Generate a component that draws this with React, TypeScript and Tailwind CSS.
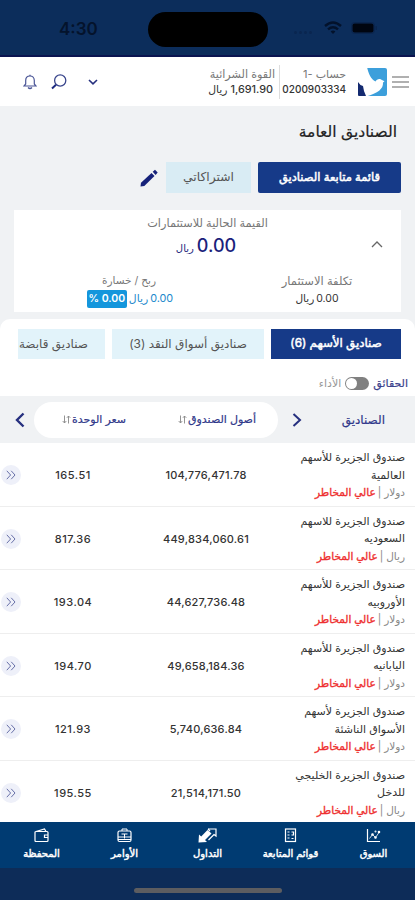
import React from "react";

export default function App() {
  return (
    <div
      dir="rtl"
      className="flex flex-col w-[415px] h-[900px] overflow-hidden bg-white text-[#333] font-[Inter,'DejaVu_Sans',sans-serif]"
    >
      <StatusBar />
      <Header />
      <Summary />
      <Funds />
      <BottomNav />
    </div>
  );
}

const funds = [
  { name: ["صندوق الجزيرة للأسهم", "العالمية"], currency: "دولار", assets: "104,776,471.78", price: "165.51" },
  { name: ["صندوق الجزيرة للاسهم", "السعوديه"], currency: "ريال", assets: "449,834,060.61", price: "817.36" },
  { name: ["صندوق الجزيرة للأسهم", "الأوروبيه"], currency: "دولار", assets: "44,627,736.48", price: "193.04" },
  { name: ["صندوق الجزيرة للأسهم", "اليابانيه"], currency: "دولار", assets: "49,658,184.36", price: "194.70" },
  { name: ["صندوق الجزيرة لأسهم", "الأسواق الناشئة"], currency: "دولار", assets: "5,740,636.84", price: "121.93" },
  { name: ["صندوق الجزيرة الخليجي", "للدخل"], currency: "ريال", assets: "21,514,171.50", price: "195.55" },
];

const StatusBar = () => {
  return (
    <div
      dir="ltr"
      className="flex-none flex items-center h-[57px] bg-[#0c2d5b] border-b-2 border-[#0b1450]"
    >
      <div className="w-[148px] pl-[59px] pt-[4px] text-[17px] font-semibold text-[#04132c]">
        4:30
      </div>
      <div className="w-[120px] h-[35px] mt-[3px] rounded-full bg-black" />
      <div className="flex items-center pl-[26px] pt-[1px]">
        <div className="flex gap-[2px] w-[30px] pt-[9px]">
          <i className="w-[3px] h-[3px] rounded-full bg-[#0a2650]" />
          <i className="w-[3px] h-[3px] rounded-full bg-[#0a2650]" />
          <i className="w-[3px] h-[3px] rounded-full bg-[#0a2650]" />
          <i className="w-[3px] h-[3px] rounded-full bg-[#0a2650]" />
        </div>
        <svg width="18" height="14" viewBox="0 0 18 14" fill="none" stroke="#03122b" strokeWidth="2.4">
          <path d="M1 5 Q9 -2 17 5" />
          <path d="M4 8.3 Q9 4 14 8.3" />
          <path d="M6.6 10.6 Q9 8.6 11.4 10.6 L9 13 Z" fill="#03122b" stroke="none" />
        </svg>
        <svg className="ml-[9px]" width="27" height="12" viewBox="0 0 27 12">
          <rect x="0.5" y="0.5" width="23" height="11" rx="3" fill="none" stroke="#0a254e" />
          <rect x="1.5" y="1.5" width="21" height="9" rx="2" fill="#000510" />
          <rect x="24.5" y="4" width="1.5" height="4" rx="0.7" fill="#0a254e" />
        </svg>
      </div>
    </div>
  );
};

const Header = () => {
  return (
    <div className="flex-none flex items-center h-[49px] bg-white pr-[6px]">
      <div className="flex flex-col gap-[3px] w-[17px]">
        <div className="h-[2px] bg-[#b0b0b0]" />
        <div className="h-[2px] bg-[#b0b0b0]" />
        <div className="h-[2px] bg-[#b0b0b0]" />
      </div>
      <svg className="mr-[5px]" width="29" height="30" viewBox="0 0 29 30">
        <path d="M9 1 H27 Q29 1 29 3 V27 Q29 29 27 29 H8 Z" fill="#3c9fdb" />
        <path d="M9 0 C10.5 7 13 12 17.5 14.5 C18.5 12.5 21 11.3 23 12.5 L26.500 14.300 L25 15.500 C25.500 22 20 26 8 29.500 L0 15 Z" fill="#fff" />
        <path d="M0 15 Q2 18.5 5 19 Q5.500 24 8 29 H1 Q0 29 0 28 Z" fill="#142a70" />
      </svg>
      <div className="flex flex-col items-start mr-[12px] w-[63px] text-[11px] leading-[15px] whitespace-nowrap">
        <div className="text-[#777]">حساب -1</div>
        <div className="text-[10px] font-medium">0200903334</div>
      </div>
      <div className="w-px h-[34px] mr-[3px] bg-[#ddd]" />
      <div className="flex flex-col items-start mr-[4px] w-[66px] text-[11px] leading-[15px] whitespace-nowrap">
        <div className="text-[11.2px] text-[#777]">القوة الشرائية</div>
        <div className="flex gap-[3px] pr-[2px] text-[10.8px] font-medium">
          <span>1,691.90</span>
          <span>ريال</span>
        </div>
      </div>
      <svg className="mr-[111px]" width="10" height="6" viewBox="0 0 10 6" fill="none" stroke="#26307f" strokeWidth="1.6">
        <path d="M1 1 L5 4.8 L9 1" />
      </svg>
      <svg className="mr-auto" width="16" height="16" viewBox="0 0 16 16" fill="none" stroke="#39458c">
        <circle cx="9.2" cy="6.5" r="5.6" strokeWidth="1.3" />
        <path d="M5 10.8 L1 14.5" strokeWidth="2" stroke="#1d2a80" />
      </svg>
      <svg className="mr-[14px] ml-[23px]" width="14" height="16" viewBox="0 0 14 16" fill="none" stroke="#4a5596" strokeWidth="1.2">
        <path d="M1 12 H13 L11.3 10 V6.5 C11.3 3.5 9.5 2 7 2 C4.5 2 2.7 3.5 2.7 6.5 V10 Z" />
        <path d="M7 2 V0.7 M5 13.5 Q7 15.5 9 13.5" />
      </svg>
    </div>
  );
};

const Summary = () => {
  return (
    <div className="flex-none h-[213px] px-[14px] bg-[#f0f2f4]">
      <h1 className="pt-[14px] pr-[4px] h-[56px] text-[15.5px] leading-[24px] text-[#222] [-webkit-text-stroke:0.2px]">
        الصناديق العامة
      </h1>
      <div className="flex items-center h-[31px]">
        <div className="flex items-center justify-center w-[143px] h-[31px] rounded-[2px] bg-[#163a88] text-white text-[11.5px] [-webkit-text-stroke:0.5px] whitespace-nowrap">
          قائمة متابعة الصناديق
        </div>
        <div className="flex items-center justify-center w-[85px] h-[31px] mr-[7px] bg-[#d9ecf4] text-[12.3px] text-[#555]">
          اشتراكاتي
        </div>
        <svg className="mr-[8px]" width="18" height="18" viewBox="0 0 18 18" fill="#16227a">
          <path d="M0.5 17.5 L1 13.7 L11.5 4 L14.5 7 L4.3 17 Z" />
          <path d="M12.7 2.8 L15 0.7 L17.7 3.6 L15.6 5.9 Z" />
        </svg>
      </div>
      <div className="mt-[17px] h-[102px] bg-white">
        <div className="flex items-start h-[62px]">
          <svg className="mt-[31px] mr-[18px]" width="12" height="7" viewBox="0 0 12 7" fill="none" stroke="#666" strokeWidth="1.3">
            <path d="M1 6 L6 1 L11 6" />
          </svg>
          <div className="flex-1 flex flex-col items-center pl-[30px] pt-[4px]">
            <div className="text-[11.3px] leading-[18px] text-[#777]">القيمة الحالية للاستثمارات</div>
            <div className="flex items-baseline gap-[3px] pr-[3px] text-[#1b1f7c] leading-[28px]">
              <span className="text-[18px] font-medium">0.00</span>
              <span className="text-[10px]">ريال</span>
            </div>
          </div>
        </div>
        <div className="flex text-[11px] leading-[18px]">
          <div className="flex flex-col items-center w-[168px]">
            <div className="text-[11.5px] text-[#777]">تكلفة الاستثمار</div>
            <div className="flex gap-[2px] text-[10.5px]">
              <span>0.00</span>
              <span>ريال</span>
            </div>
          </div>
          <div className="flex flex-col items-center w-[206px]">
            <div className="pr-[2px] text-[10.5px] text-[#777]">ربح / خسارة</div>
            <div className="flex items-center gap-[2px] text-[10.8px] text-[#2389cc]">
              <span>0.00</span>
              <span>ريال</span>
              <span dir="ltr" className="w-[40px] h-[18px] text-center rounded-[2px] bg-[#1496dc] text-white font-semibold text-[10.5px]">
                % 0.00
              </span>
            </div>
          </div>
        </div>
      </div>
    </div>
  );
};

const Funds = () => {
  return (
    <div className="flex-none h-[503px] overflow-hidden bg-[#f0f2f4]">
      <div className="h-[77px] pt-[10px] rounded-t-[10px] bg-white">
        <div className="flex gap-[7px] mr-[14px] ml-[18px] h-[30px] overflow-hidden text-[12px] whitespace-nowrap">
          <div className="flex-none flex items-center justify-center w-[130px] bg-[#163a88] text-white text-[11.8px] [-webkit-text-stroke:0.5px]">
            صناديق الأسهم (6)
          </div>
          <div className="flex-none flex items-center justify-center w-[152px] bg-[#e2f3fa] text-[#555]">
            صناديق أسواق النقد (3)
          </div>
          <div className="flex-none flex items-center w-[88px] pr-[17px] bg-[#e2f3fa] text-[#555]">
            صناديق قابضة
          </div>
        </div>
        <div className="flex items-center h-[20px] mt-[14px] pr-[7px] text-[11px]">
          <span className="text-[#3a3f8c] [-webkit-text-stroke:0.2px]">الحقائق</span>
          <span className="flex justify-end items-center w-[24px] h-[13px] mx-[4px] rounded-full bg-[#808080]">
            <span className="w-[11px] h-[11px] ml-px rounded-full bg-white" />
          </span>
          <span className="text-[#999]">الأداء</span>
        </div>
      </div>
      <div className="flex items-center h-[47px] text-[#30388a] [-webkit-text-stroke:0.2px]">
        <div className="w-[113px] pr-[30px] text-[12px]">الصناديق</div>
        <svg width="10" height="16" viewBox="0 0 10 16" fill="none" stroke="#26307f" strokeWidth="2">
          <path d="M1.5 2 L8 8 L1.5 14" />
        </svg>
        <div className="flex items-center w-[244px] h-[36px] mr-[14px] rounded-full bg-white">
          <div className="flex items-center w-[122px] pr-[22px] text-[11px]">
            أصول الصندوق
            <SortIcon />
          </div>
          <div className="flex items-center pr-[30px] text-[11px]">
            سعر الوحدة
            <SortIcon />
          </div>
        </div>
        <svg className="mr-[9px]" width="10" height="16" viewBox="0 0 10 16" fill="none" stroke="#26307f" strokeWidth="2.4">
          <path d="M8.5 1.5 L2 8 L8.5 14.5" />
        </svg>
      </div>
      <div className="bg-white">
        {funds.map((item) => (
          <FundRow key={item.assets} fund={item} />
        ))}
      </div>
    </div>
  );
};

const SortIcon = () => {
  return (
    <svg className="mr-[1px]" width="9" height="9" viewBox="0 0 9 9" fill="none" stroke="#888" strokeWidth="0.9">
      <path d="M2.5 0.5 V8 M0.7 6 L2.5 8 L4.3 6" />
      <path d="M6.5 8.5 V1 M4.9 2.8 L6.5 1 L8.3 2.8" />
    </svg>
  );
};

const FundRow = ({ fund }: any) => {
  return (
    <div className="flex items-center h-[63.5px] pt-[2px] border-b border-[#eee]">
      <div className="w-[127px] pr-[10px] text-[11px] leading-[17.5px] whitespace-nowrap">
        <div>{fund.name[0]}</div>
        <div>{fund.name[1]}</div>
        <div className="text-[10.5px] text-[#888]">
          {fund.currency} |
          <span className="mr-[2px] text-[#ee3030] [-webkit-text-stroke:0.35px]">عالي المخاطر</span>
        </div>
      </div>
      <div dir="ltr" className="w-[164px] text-center text-[11px] tracking-[0.2px] font-medium">{fund.assets}</div>
      <div dir="ltr" className="w-[102px] text-center text-[11px] tracking-[0.5px] font-medium">{fund.price}</div>
      <div className="flex items-center justify-center w-[20px] h-[20px] mr-px rounded-full bg-[#eef0f9]">
        <svg width="10" height="10" viewBox="0 0 10 10" fill="none" stroke="#6870a8">
          <path d="M0.8 0.8 L4.6 5 L0.8 9.2" />
          <path d="M5.2 0.8 L9 5 L5.2 9.2" />
        </svg>
      </div>
    </div>
  );
};

const BottomNav = () => {
  return (
    <div className="flex-none h-[78px] bg-[#0d2c58]">
      <div className="flex h-[46px] bg-[#003b72] text-white text-[10px] [-webkit-text-stroke:0.45px]">
        <NavItem text="السوق">
          <path d="M1.5 1 V13.5 H14" />
          <path d="M3.5 10.5 L6.5 6.5 L9.5 9.5 L13 4.5" strokeWidth="0.8" />
          <circle cx="6.5" cy="6.5" r="0.7" fill="#fff" />
          <circle cx="9.5" cy="9.5" r="0.7" fill="#fff" />
          <circle cx="13" cy="4" r="0.7" fill="#fff" />
          <circle cx="9.5" cy="3.5" r="0.4" />
        </NavItem>
        <NavItem text="قوائم المتابعة">
          <rect x="2.5" y="1" width="10" height="12.5" />
          <path d="M4.5 4 H6.5 M4.5 7 H6.5 M4.5 10 H6.5 M8.5 4 H10.5 V7 H8.5 M8.5 10.5 H10.5" />
        </NavItem>
        <NavItem text="التداول">
          <path d="M-1.5 14.5 L-1 6.500 L1.200 8.500 L7.500 2 L11.500 5.500 L5 12 L7 14 Z" fill="#fff" stroke="none" />
          <path d="M8 1 H16 V8 L14 6.500 L8.500 12" />
          <path d="M8 1 L10 3" />
        </NavItem>
        <NavItem text="الأوامر">
          <rect x="1" y="3" width="13" height="10.5" rx="1.5" />
          <path d="M5 3 V1 H10 V3 M1 9 H14 M1 11.5 H14 M4.5 6 H10.5 M7.5 6 V10.5" strokeWidth="1" />
        </NavItem>
        <NavItem text="المحفظة">
          <path d="M2 3.5 H13 Q14 3.5 14 4.5 V12.5 Q14 13.5 13 13.5 H2 Q1 13.5 1 12.5 V4 Z" />
          <path d="M2 3.5 L10.5 1 L12 3.5 M14 7 H10.5 V9.5 H14" />
        </NavItem>
      </div>
      <div className="w-[148px] h-[5px] mt-[20px] mx-auto rounded-full bg-[#5d5d60]" />
    </div>
  );
};

const NavItem = ({ text, children }: any) => {
  return (
    <div className="flex flex-col items-center w-[83px] pt-[6px] whitespace-nowrap">
      <svg className="overflow-visible" width="15" height="15" viewBox="0 0 15 15" fill="none" stroke="#fff" strokeWidth="1.2">
        {children}
      </svg>
      <div className="mt-[2px] leading-[16px]">{text}</div>
    </div>
  );
};
